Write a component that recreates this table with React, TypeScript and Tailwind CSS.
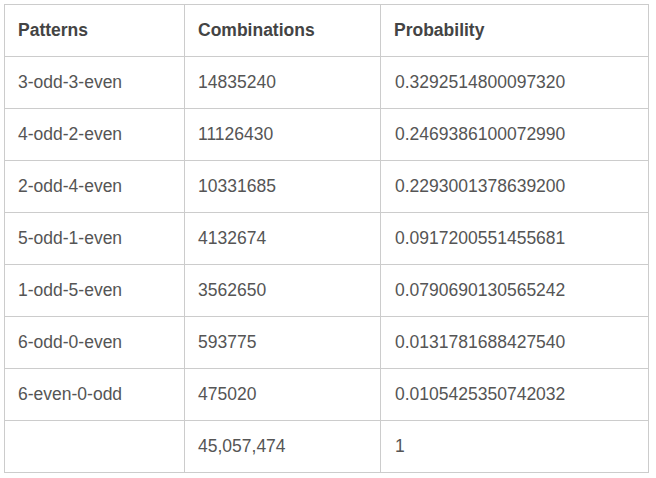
type Row = {
  pattern: string;
  combinations: string;
  probability: string;
};

const rows: Row[] = [
  { pattern: '3-odd-3-even', combinations: '14835240', probability: '0.3292514800097320' },
  { pattern: '4-odd-2-even', combinations: '11126430', probability: '0.2469386100072990' },
  { pattern: '2-odd-4-even', combinations: '10331685', probability: '0.2293001378639200' },
  { pattern: '5-odd-1-even', combinations: '4132674', probability: '0.0917200551455681' },
  { pattern: '1-odd-5-even', combinations: '3562650', probability: '0.0790690130565242' },
  { pattern: '6-odd-0-even', combinations: '593775', probability: '0.0131781688427540' },
  { pattern: '6-even-0-odd', combinations: '475020', probability: '0.0105425350742032' },
  { pattern: '', combinations: '45,057,474', probability: '1' },
];

export default function App() {
  return (
    <div className="bg-white p-[4px] font-['Liberation_Sans',Arial,sans-serif] text-[17.5px]">
      <table className="w-[645px] table-fixed border-collapse">
        <colgroup>
          <col className="w-[180px]" />
          <col className="w-[196px]" />
          <col />
        </colgroup>
        <thead>
          <tr className="h-[52px]">
            {['Patterns', 'Combinations', 'Probability'].map(title => (
              <th
                key={title}
                className="border border-[#cccccc] px-[13px] text-left font-bold text-[#444444]"
              >
                {title}
              </th>
            ))}
          </tr>
        </thead>
        <tbody>
          {rows.map(({ pattern, combinations, probability }, i) => (
            <tr key={i} className="h-[52px] text-[#555555]">
              <td className="border border-[#cccccc] px-[13px]">{pattern}</td>
              <td className="border border-[#cccccc] px-[13px]">{combinations}</td>
              <td className="border border-[#cccccc] px-[14px]">{probability}</td>
            </tr>
          ))}
        </tbody>
      </table>
    </div>
  );
}
